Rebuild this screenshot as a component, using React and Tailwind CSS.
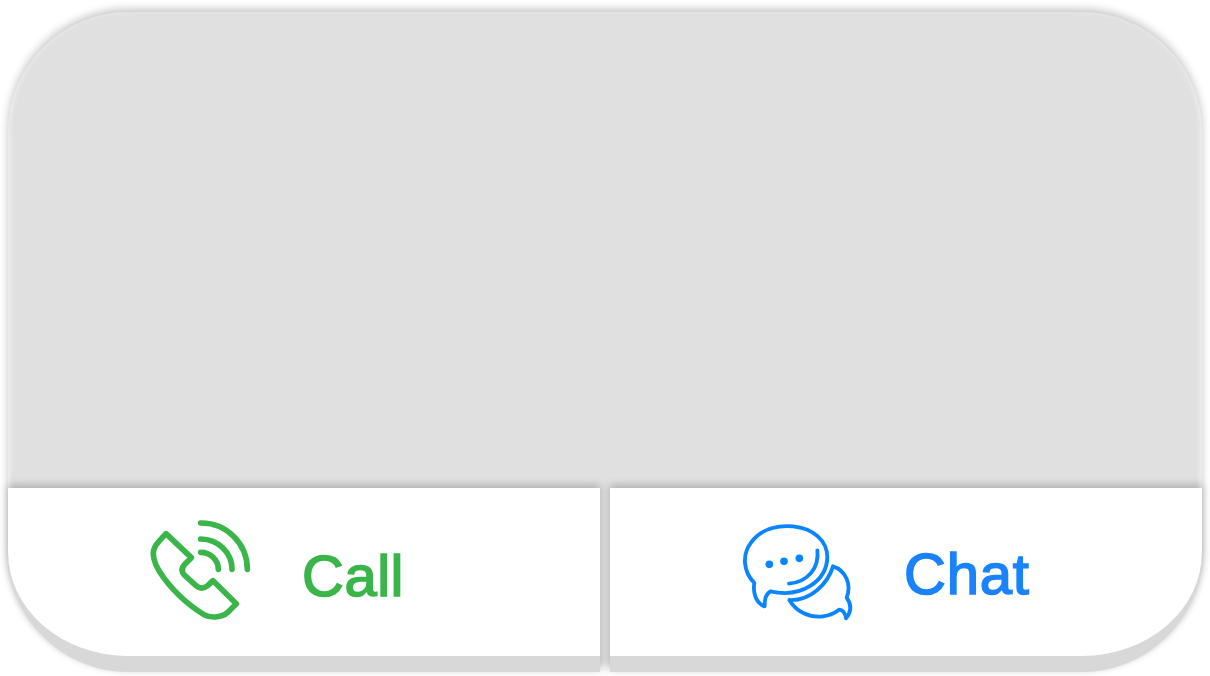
const PhoneIcon = () => (
  <svg className="block h-[130px] w-[140px] shrink-0" viewBox="0 0 420 390" fill="none" stroke="#39b54a" strokeWidth="17" strokeLinecap="round" strokeLinejoin="round">
    <path d="M108 86L184 158L165 177Q148 195 164 211L198 242Q215 257 233 242L249 227L319 296L292 323Q279 335 255 336Q237 337 222 329C172 299 119 249 88 199C72 174 65 145 74 128Q77 119 86 110Z" />
    <path d="M212 54C290 53 352 116 352 193M212 102C265 103 306 142 306 193M212 142C241 142 265 164 265 193" />
  </svg>
);

const ChatIcon = () => (
  <svg className="block h-[125px] w-[140px] shrink-0" viewBox="0 0 420 375" fill="none" stroke="#0a84ff" strokeWidth="11.5" strokeLinecap="round" strokeLinejoin="round">
    <path d="M73 219C40 185 35 135 63 98C91 59 139 45 189 49C250 55 292 92 292 142C290 211 217 266 121 244C105 254 104 271 104 289C78 280 68 249 73 219Z" />
    <path d="M262 121C268 172 236 215 177 221M309 169C293 222 241 273 178 270C199 306 238 324 279 319Q307 315 327 299C342 300 346 312 348 325C365 304 364 282 350 263C365 225 348 181 309 169Z" />
    <g fill="#0a84ff" stroke="none">
      <circle cx="118" cy="163" r="11.5" />
      <circle cx="162" cy="154" r="11.5" />
      <circle cx="208" cy="145" r="11.5" />
    </g>
  </svg>
);

export default function App() {
  return (
    <div className="h-[676px] w-[1210px] overflow-hidden bg-white px-[8px] pt-[12px] font-['Liberation_Sans',Arial,sans-serif]">
      <main className="flex h-[657px] w-[1194px] flex-col rounded-[120px] bg-[#e0e0e0] shadow-[0_-3px_8px_rgba(0,0,0,0.23),inset_0_-3px_7px_rgba(255,255,255,0.9)]">
        <div className="h-[476px] shrink-0" />
        <div className="flex h-[184px] shrink-0 gap-[10px]">
          <button className="flex h-[184px] w-[592px] items-start rounded-bl-[120px] border-b-[16.5px] border-[#d8d8d8] bg-white pt-[17px] pl-[122px] shadow-[0_-3px_8px_rgba(0,0,0,0.23)]">
            <PhoneIcon />
            <span className="mt-[38px] ml-[32px] text-[58px] leading-[66px] tracking-[0.5px] text-[#39b54a] [-webkit-text-stroke:1.6px_#39b54a]">Call</span>
          </button>
          <button className="flex h-[184px] w-[592px] items-start rounded-br-[120px] border-b-[16.5px] border-[#d8d8d8] bg-white pt-[22px] pl-[120px] shadow-[0_-3px_8px_rgba(0,0,0,0.23)]">
            <ChatIcon />
            <span className="mt-[31px] ml-[34px] text-[58px] leading-[66px] tracking-[0.8px] text-[#1a82fb] [-webkit-text-stroke:1.6px_#1a82fb]">Chat</span>
          </button>
        </div>
      </main>
    </div>
  );
}
